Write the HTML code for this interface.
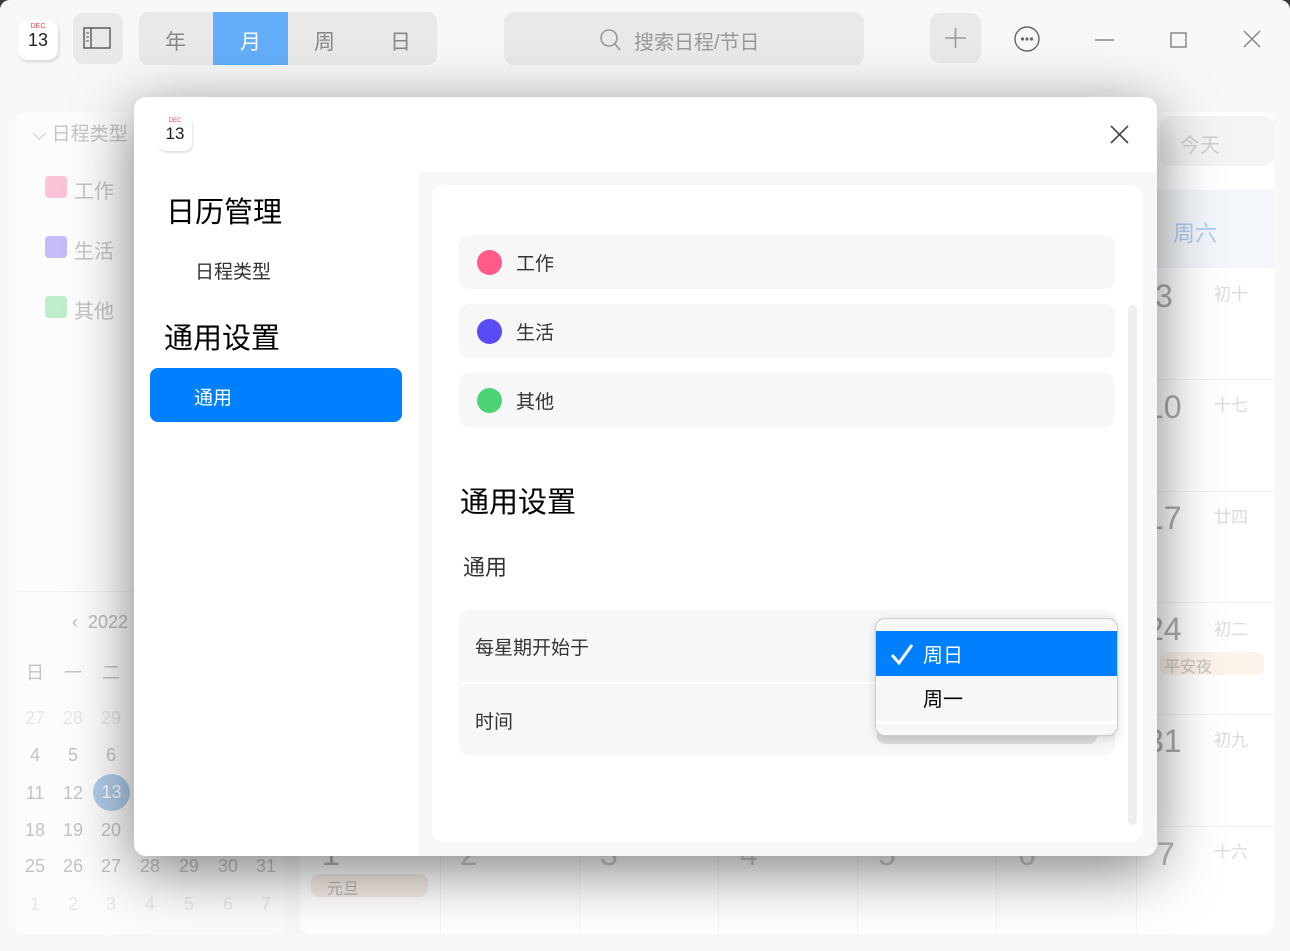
<!DOCTYPE html>
<html><head><meta charset="utf-8">
<style>
*{box-sizing:border-box;margin:0;padding:0}
html,body{width:1290px;height:951px;overflow:hidden;background:#3a3a3a}
body{font-family:"Liberation Sans","Noto Sans CJK SC",sans-serif;position:relative}
.abs{position:absolute}
#win{position:absolute;left:0;top:0;width:1290px;height:951px;background:#f5f5f5;border-radius:10px 10px 0 0;overflow:hidden}
#top{position:absolute;left:0;top:0;width:1290px;height:76px;background:#f8f8f8}
.btn{position:absolute;background:#e9e9e9;border-radius:10px}
.cell{position:absolute;border-top:1px solid #eee}
.mc{position:absolute;width:38px;text-align:center;font-size:18px;line-height:22px;color:#aaa}
.mc.l{color:#ddd}
</style></head><body>
<div id="win">
 <div id="top">
  <div class="abs" style="left:18px;top:20px;width:40px;height:40px;background:#fff;border-radius:10px;box-shadow:1px 2px 3px rgba(0,0,0,.15);text-align:center">
   <div style="font-size:7px;color:#e44;margin-top:3px;line-height:8px">DEC</div>
   <div style="font-size:18px;line-height:18px;color:#222">13</div>
  </div>
  <div class="btn" style="left:73px;top:13px;width:50px;height:51px">
   <svg width="50" height="51"><rect x="11" y="15" width="26" height="20" fill="none" stroke="#555" stroke-width="1.4"/><line x1="18" y1="15" x2="18" y2="35" stroke="#555" stroke-width="1.4"/><line x1="13" y1="20" x2="16" y2="20" stroke="#555"/><line x1="13" y1="24" x2="16" y2="24" stroke="#555"/><line x1="13" y1="28" x2="16" y2="28" stroke="#555"/></svg>
  </div>
  <div class="btn" style="left:139px;top:12px;width:298px;height:53px;overflow:hidden;font-size:21px;color:#888">
   <span class="abs" style="left:26px;top:14px">年</span>
   <div class="abs" style="left:74px;top:0;width:75px;height:53px;background:#64aef9;color:#fff;text-align:center;padding-top:14px">月</div>
   <span class="abs" style="left:175px;top:14px">周</span>
   <span class="abs" style="left:251px;top:14px">日</span>
  </div>
  <div class="btn" style="left:504px;top:12px;width:360px;height:53px;color:#999;font-size:20px">
   <svg class="abs" style="left:94px;top:15px" width="26" height="26"><circle cx="11" cy="11" r="8" fill="none" stroke="#999" stroke-width="1.6"/><line x1="17" y1="17" x2="22" y2="23" stroke="#999" stroke-width="1.6"/></svg>
   <span class="abs" style="left:130px;top:14px">搜索日程/节日</span>
  </div>
  <div class="btn" style="left:930px;top:13px;width:51px;height:50px"><svg width="51" height="50"><line x1="25.5" y1="15" x2="25.5" y2="35" stroke="#999" stroke-width="1.6"/><line x1="15" y1="25" x2="36" y2="25" stroke="#999" stroke-width="1.6"/></svg></div>
  <svg class="abs" style="left:1012px;top:24px" width="30" height="30"><circle cx="15" cy="15" r="12" fill="none" stroke="#666" stroke-width="1.4"/><circle cx="10.5" cy="15" r="1.6" fill="#666"/><circle cx="15" cy="15" r="1.6" fill="#666"/><circle cx="19.5" cy="15" r="1.6" fill="#666"/></svg>
  <svg class="abs" style="left:1094px;top:30px" width="22" height="20"><line x1="1" y1="10" x2="20" y2="10" stroke="#888" stroke-width="1.5"/></svg>
  <svg class="abs" style="left:1169px;top:30px" width="20" height="20"><rect x="2" y="3" width="15" height="14" fill="none" stroke="#888" stroke-width="1.5"/></svg>
  <svg class="abs" style="left:1242px;top:29px" width="20" height="20"><path d="M2 2L18 18M18 2L2 18" stroke="#888" stroke-width="1.5"/></svg>
 </div>
 <div class="abs" style="left:15px;top:112px;width:270px;height:822px;background:#fbfbfb;border-radius:10px"></div>
 <div class="abs" style="left:32px;top:119px;font-size:19px;color:#aaa">⌵ 日程类型</div>
 <div class="abs" style="left:45px;top:176px;width:22px;height:22px;background:#f9a8c7;border-radius:4px"></div><div class="abs" style="left:74px;top:175px;font-size:20px;color:#aaa">工作</div>
 <div class="abs" style="left:45px;top:236px;width:22px;height:22px;background:#aaa0f5;border-radius:4px"></div><div class="abs" style="left:74px;top:235px;font-size:20px;color:#aaa">生活</div>
 <div class="abs" style="left:45px;top:296px;width:22px;height:22px;background:#a3e6b6;border-radius:4px"></div><div class="abs" style="left:74px;top:295px;font-size:20px;color:#aaa">其他</div>
 <div class="abs" style="left:17px;top:591px;width:268px;height:1px;background:#eee"></div>
 <div class="abs" style="left:72px;top:612px;font-size:18px;color:#999">‹ &nbsp;2022</div>

 <div class="mc" style="left:16px;top:662px">日</div><div class="mc" style="left:54px;top:662px">一</div><div class="mc" style="left:92px;top:662px">二</div>
 <div class="mc l" style="left:16px;top:707px">27</div><div class="mc l" style="left:54px;top:707px">28</div><div class="mc l" style="left:92px;top:707px">29</div>
 <div class="mc" style="left:16px;top:744px">4</div><div class="mc" style="left:54px;top:744px">5</div><div class="mc" style="left:92px;top:744px">6</div>
 <div class="mc" style="left:16px;top:782px">11</div><div class="mc" style="left:54px;top:782px">12</div>
 <div class="mc" style="left:16px;top:819px">18</div><div class="mc" style="left:54px;top:819px">19</div><div class="mc" style="left:92px;top:819px">20</div>
 <div class="mc" style="left:16px;top:855px">25</div><div class="mc" style="left:54px;top:855px">26</div><div class="mc" style="left:92px;top:855px">27</div><div class="mc" style="left:131px;top:855px">28</div><div class="mc" style="left:170px;top:855px">29</div><div class="mc" style="left:209px;top:855px">30</div><div class="mc" style="left:247px;top:855px">31</div>
 <div class="mc l" style="left:16px;top:893px">1</div><div class="mc l" style="left:54px;top:893px">2</div><div class="mc l" style="left:92px;top:893px">3</div><div class="mc l" style="left:131px;top:893px">4</div><div class="mc l" style="left:170px;top:893px">5</div><div class="mc l" style="left:209px;top:893px">6</div><div class="mc l" style="left:247px;top:893px">7</div>
 <div class="abs" style="left:93px;top:774px;width:37px;height:37px;border-radius:50%;background:#8fb7e0;color:#fff;font-size:18px;text-align:center;line-height:37px">13</div>

 <div class="abs" style="left:300px;top:112px;width:974px;height:822px;background:#fff;border-radius:10px"></div>
 <div class="abs" style="left:1160px;top:116px;width:114px;height:50px;background:#efefef;border-radius:10px;color:#bbb;font-size:20px;padding:13px 0 0 20px">今天</div>
 <div class="abs" style="left:1136px;top:190px;width:138px;height:78px;background:#eef3f8;color:#8ab8ec;font-size:22px;padding:26px 0 0 37px">周六</div>
 <div class="abs" style="left:1155px;top:278px;font-size:32px;color:#888">3</div><div class="abs" style="left:1214px;top:280px;font-size:17px;color:#ccc">初十</div>
 <div class="cell" style="left:1136px;top:379px;width:138px"></div>
 <div class="abs" style="left:1146px;top:389px;font-size:32px;color:#888">10</div><div class="abs" style="left:1214px;top:391px;font-size:17px;color:#ccc">十七</div>
 <div class="cell" style="left:1136px;top:491px;width:138px"></div>
 <div class="abs" style="left:1146px;top:500px;font-size:32px;color:#888">17</div><div class="abs" style="left:1214px;top:503px;font-size:17px;color:#ccc">廿四</div>
 <div class="cell" style="left:1136px;top:602px;width:138px"></div>
 <div class="abs" style="left:1146px;top:611px;font-size:32px;color:#888">24</div><div class="abs" style="left:1214px;top:615px;font-size:17px;color:#ccc">初二</div>
 <div class="abs" style="left:1160px;top:652px;width:104px;height:23px;background:#fbeee3;border-radius:8px;color:#aaa;font-size:16px;padding:1px 0 0 4px">平安夜</div>
 <div class="cell" style="left:1136px;top:714px;width:138px"></div>
 <div class="abs" style="left:1146px;top:723px;font-size:32px;color:#888">31</div><div class="abs" style="left:1214px;top:726px;font-size:17px;color:#ccc">初九</div>
 <div class="cell" style="left:300px;top:826px;width:974px"></div>
 <div class="abs" style="left:322px;top:836px;font-size:32px;color:#999">1</div>
 <div class="abs" style="left:311px;top:874px;width:117px;height:23px;background:#f2e6dc;border-radius:8px;color:#999;font-size:16px;padding:1px 0 0 16px">元旦</div>
 <div class="abs" style="left:460px;top:836px;font-size:32px;color:#bbb">2</div>
 <div class="abs" style="left:600px;top:836px;font-size:32px;color:#bbb">3</div>
 <div class="abs" style="left:740px;top:836px;font-size:32px;color:#bbb">4</div>
 <div class="abs" style="left:878px;top:836px;font-size:32px;color:#bbb">5</div>
 <div class="abs" style="left:1018px;top:836px;font-size:32px;color:#bbb">6</div>
 <div class="abs" style="left:1157px;top:836px;font-size:32px;color:#999">7</div><div class="abs" style="left:1214px;top:838px;font-size:17px;color:#ccc">十六</div>
 <div class="abs" style="left:440px;top:826px;width:1px;height:108px;background:#f0f0f0"></div>
 <div class="abs" style="left:579px;top:826px;width:1px;height:108px;background:#f0f0f0"></div>
 <div class="abs" style="left:718px;top:826px;width:1px;height:108px;background:#f0f0f0"></div>
 <div class="abs" style="left:857px;top:826px;width:1px;height:108px;background:#f0f0f0"></div>
 <div class="abs" style="left:996px;top:826px;width:1px;height:108px;background:#f0f0f0"></div>
 <div class="abs" style="left:1136px;top:826px;width:1px;height:108px;background:#f0f0f0"></div>
 <div class="abs" style="left:0;top:76px;width:1290px;height:875px;background:rgba(255,255,255,.3)"></div>
</div>

<div class="abs" style="left:134px;top:97px;width:1023px;height:759px;background:#fff;border-radius:12px;box-shadow:0 14px 60px rgba(0,0,0,.5);overflow:hidden">
 <div class="abs" style="left:24px;top:18px;width:34px;height:36px;border-radius:8px;box-shadow:1px 2px 2px rgba(0,0,0,.12);text-align:center">
  <div style="font-size:6px;color:#e44;line-height:7px;margin-top:3px">DEC</div>
  <div style="font-size:17px;line-height:17px;color:#222">13</div>
 </div>
 <svg class="abs" style="left:975px;top:27px" width="22" height="22"><path d="M2 2L19 19M19 2L2 19" stroke="#444" stroke-width="1.6"/></svg>
 <div class="abs" style="left:32px;top:92px;font-size:29px;color:#000">日历管理</div>
 <div class="abs" style="left:61px;top:160px;font-size:19px;color:#333">日程类型</div>
 <div class="abs" style="left:30px;top:218px;font-size:29px;color:#000">通用设置</div>
 <div class="abs" style="left:16px;top:271px;width:252px;height:54px;background:#0080ff;border-radius:8px;color:#fff;font-size:19px;padding:15px 0 0 44px">通用</div>

 <div class="abs" style="left:285px;top:75px;width:738px;height:684px;background:#f7f7f7"></div>
 <div class="abs" style="left:298px;top:88px;width:711px;height:657px;background:#fff;border-radius:12px">
  <div class="abs" style="left:27px;top:50px;width:656px;height:54px;background:#f7f7f7;border-radius:10px"><div class="abs" style="left:18px;top:15px;width:25px;height:25px;border-radius:50%;background:#ff5a8a"></div><span class="abs" style="left:57px;top:14px;font-size:19px;color:#333">工作</span></div>
  <div class="abs" style="left:27px;top:119px;width:656px;height:54px;background:#f7f7f7;border-radius:10px"><div class="abs" style="left:18px;top:15px;width:25px;height:25px;border-radius:50%;background:#5a4cf5"></div><span class="abs" style="left:57px;top:14px;font-size:19px;color:#333">生活</span></div>
  <div class="abs" style="left:27px;top:188px;width:656px;height:54px;background:#f7f7f7;border-radius:10px"><div class="abs" style="left:18px;top:15px;width:25px;height:25px;border-radius:50%;background:#4cd474"></div><span class="abs" style="left:57px;top:14px;font-size:19px;color:#333">其他</span></div>
  <div class="abs" style="left:28px;top:294px;font-size:29px;color:#000">通用设置</div>
  <div class="abs" style="left:31px;top:365px;font-size:22px;color:#333">通用</div>
  <div class="abs" style="left:27px;top:425px;width:656px;height:145px;background:#f7f7f7;border-radius:10px">
   <span class="abs" style="left:16px;top:23px;font-size:19px;color:#333">每星期开始于</span>
   <div class="abs" style="left:0;top:72px;width:656px;height:2px;background:#fff"></div>
   <span class="abs" style="left:16px;top:97px;font-size:19px;color:#333">时间</span>
   <div class="abs" style="left:418px;top:112px;width:220px;height:22px;background:#ddd;border-radius:0 0 8px 8px"></div>
  </div>
  <div class="abs" style="left:696px;top:120px;width:9px;height:520px;background:#efefef;border-radius:5px"></div>
 </div>
 <div class="abs" style="left:741px;top:521px;width:243px;height:118px;background:#f7f7f7;border:1px solid #ccc;border-radius:10px;overflow:hidden;box-shadow:0 3px 10px rgba(0,0,0,.15)">
  <div class="abs" style="left:0;top:12px;width:243px;height:45px;background:#0080ff;color:#fff;font-size:20px">
   <svg class="abs" style="left:13px;top:10px" width="26" height="26"><path d="M3 14L10 22L23 4" fill="none" stroke="#fff" stroke-width="3"/></svg>
   <span class="abs" style="left:47px;top:8px">周日</span>
  </div>
  <span class="abs" style="left:47px;top:64px;font-size:20px;color:#000">周一</span>
  <div class="abs" style="left:0;top:102px;width:243px;height:3px;background:#fff"></div>
 </div>
</div>
</body></html>
